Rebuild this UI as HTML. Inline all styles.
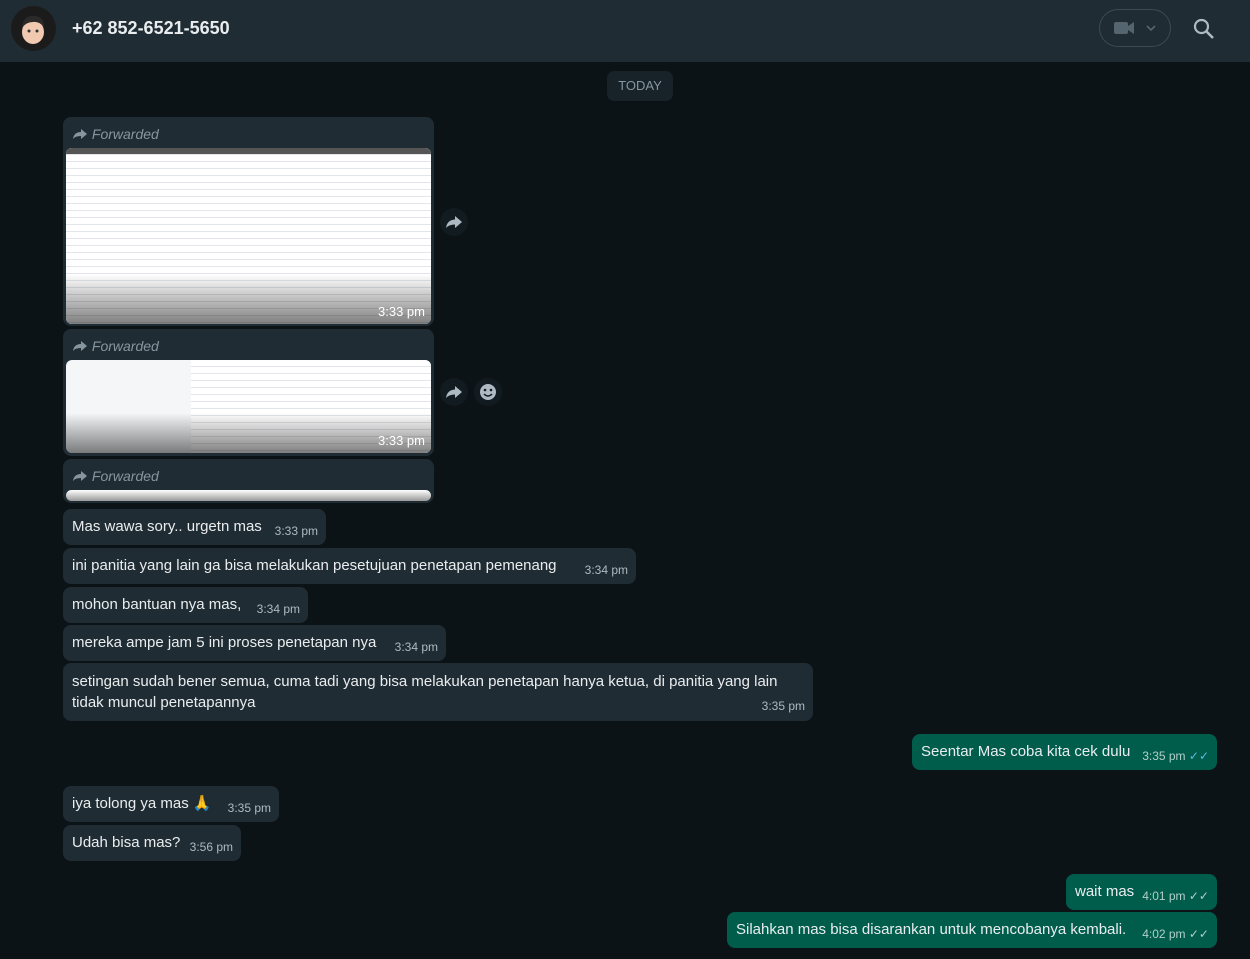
<!DOCTYPE html>
<html><head><meta charset="utf-8"><style>
*{box-sizing:border-box;margin:0;padding:0}
body{width:1250px;height:959px;overflow:hidden;background:#0c1317;font-family:"Liberation Sans",sans-serif;position:relative;color:#e9edef}
.hdr{position:absolute;left:0;top:0;width:1250px;height:62px;background:#202c33}
.av{position:absolute;left:11px;top:6px;width:45px;height:45px;border-radius:50%;background:#1b1b1b;overflow:hidden}
.name{position:absolute;left:72px;top:18px;font-size:18px;font-weight:bold;color:#e9edef}
.vc{position:absolute;left:1099px;top:9px;width:72px;height:38px;border:1px solid #3b4a54;border-radius:19px}
.b{position:absolute;background:#202c33;border-radius:8px;font-size:15px;line-height:20px;padding:8px 9px}
.o{background:#005c4b}
.t{position:absolute;right:8px;bottom:4px;font-size:12px;color:#aebac1}
.o .t{color:#b3cfca}
.fw{position:absolute;left:9px;top:7px;font-size:14px;font-style:italic;color:#8696a0}
.img{position:absolute;left:3px;right:3px;border-radius:6px;overflow:hidden;background:#f4f6f8}
.it{position:absolute;right:6px;bottom:2px;font-size:13px;color:#fff}
.date{position:absolute;left:607px;top:71px;width:66px;height:30px;background:#182229;border-radius:7px;color:#8696a0;font-size:13px;text-align:center;line-height:30px}
.ci{position:absolute;width:28px;height:28px;border-radius:50%;background:#121b20}
.rows{position:absolute;left:0;right:0;top:0;bottom:0;background:repeating-linear-gradient(#fff 0,#fff 6px,#e2e6ea 6px,#e2e6ea 7px)}
</style></head><body>
<div class="hdr">
<div class="av"><svg width="45" height="45"><ellipse cx="22" cy="26" rx="11" ry="12" fill="#f0c9b0"/><path d="M11 22 Q12 9 23 10 Q33 10 33 21 Q28 15 22 16 Q15 16 11 22Z" fill="#2a2a2a"/><circle cx="18" cy="25" r="1.5" fill="#333"/><circle cx="26" cy="25" r="1.5" fill="#333"/></svg></div>
<div class="name">+62 852-6521-5650</div>
<div class="vc"><svg width="72" height="38" style="position:absolute;left:-1px;top:-1px"><rect x="15" y="13" width="14" height="12" rx="2" fill="#54656f"/><path d="M29 17 L35 13 V25 L29 21Z" fill="#54656f"/><path d="M48 17 L52 21 L56 17" stroke="#54656f" stroke-width="1.6" fill="none"/></svg></div>
<svg style="position:absolute;left:1192px;top:17px" width="24" height="24"><circle cx="9.5" cy="9.5" r="6.5" stroke="#aebac1" stroke-width="2.2" fill="none"/><path d="M14 14 L21 21" stroke="#aebac1" stroke-width="2.6"/></svg>
</div>
<div class="date">TODAY</div>

<div class="b" style="left:63px;top:117px;width:371px;height:209px"><div class="fw"><svg width="16" height="12" style="vertical-align:-1px"><path d="M9 1 L15 6 L9 11 V8 Q3 8 1 11 Q2 4 9 4Z" fill="#8696a0"/></svg> Forwarded</div>
<div class="img" style="top:31px;height:176px"><div class="rows"></div><div style="position:absolute;left:0;right:0;top:0;height:6px;background:#555"></div><div style="position:absolute;left:0;right:0;bottom:0;height:50px;background:linear-gradient(rgba(0,0,0,0),rgba(0,0,0,.5))"></div><div class="it">3:33 pm</div></div></div>
<div class="ci" style="left:440px;top:208px"><svg width="28" height="28"><path d="M15 8 L22 14 L15 20 V16.5 Q9 16.5 6 20 Q7 12 15 11.5Z" fill="#aebac1"/></svg></div>
<div class="b" style="left:63px;top:329px;width:371px;height:127px"><div class="fw"><svg width="16" height="12" style="vertical-align:-1px"><path d="M9 1 L15 6 L9 11 V8 Q3 8 1 11 Q2 4 9 4Z" fill="#8696a0"/></svg> Forwarded</div>
<div class="img" style="top:31px;height:93px"><div class="rows" style="left:125px"></div><div style="position:absolute;left:0;right:0;bottom:0;height:40px;background:linear-gradient(rgba(0,0,0,0),rgba(0,0,0,.5))"></div><div class="it">3:33 pm</div></div></div>
<div class="ci" style="left:440px;top:378px"><svg width="28" height="28"><path d="M15 8 L22 14 L15 20 V16.5 Q9 16.5 6 20 Q7 12 15 11.5Z" fill="#aebac1"/></svg></div>
<div class="ci" style="left:474px;top:378px"><svg width="28" height="28"><circle cx="14" cy="14" r="8" fill="#aebac1"/><circle cx="11" cy="12" r="1.3" fill="#121b20"/><circle cx="17" cy="12" r="1.3" fill="#121b20"/><path d="M10 16 Q14 20 18 16" stroke="#121b20" stroke-width="1.5" fill="none"/></svg></div>
<div class="b" style="left:63px;top:459px;width:371px;height:44px"><div class="fw"><svg width="16" height="12" style="vertical-align:-1px"><path d="M9 1 L15 6 L9 11 V8 Q3 8 1 11 Q2 4 9 4Z" fill="#8696a0"/></svg> Forwarded</div>
<div class="img" style="top:31px;height:11px;background:linear-gradient(#fff,#999)"></div></div>

<div class="b" style="left:63px;top:509px;width:263px;height:36px">Mas wawa sory.. urgetn mas<span class="t">3:33 pm</span></div>
<div class="b" style="left:63px;top:548px;width:573px;height:36px">ini panitia yang lain ga bisa melakukan pesetujuan penetapan pemenang<span class="t">3:34 pm</span></div>
<div class="b" style="left:63px;top:587px;width:245px;height:36px">mohon bantuan nya mas,<span class="t">3:34 pm</span></div>
<div class="b" style="left:63px;top:625px;width:383px;height:36px">mereka ampe jam 5 ini proses penetapan nya<span class="t">3:34 pm</span></div>
<div class="b" style="left:63px;top:663px;width:750px;height:58px;line-height:21px">setingan sudah bener semua, cuma tadi yang bisa melakukan penetapan hanya ketua, di panitia yang lain tidak muncul penetapannya<span class="t">3:35 pm</span></div>
<div class="b o" style="left:912px;top:734px;width:305px;height:36px">Seentar Mas coba kita cek dulu<span class="t">3:35 pm <span style="color:#53bdeb">✓✓</span></span></div>
<div class="b" style="left:63px;top:786px;width:216px;height:36px">iya tolong ya mas 🙏<span class="t">3:35 pm</span></div>
<div class="b" style="left:63px;top:825px;width:178px;height:36px">Udah bisa mas?<span class="t">3:56 pm</span></div>
<div class="b o" style="left:1066px;top:874px;width:151px;height:36px">wait mas<span class="t">4:01 pm ✓✓</span></div>
<div class="b o" style="left:727px;top:912px;width:490px;height:36px">Silahkan mas bisa disarankan untuk mencobanya kembali.<span class="t">4:02 pm ✓✓</span></div>
</body></html>
